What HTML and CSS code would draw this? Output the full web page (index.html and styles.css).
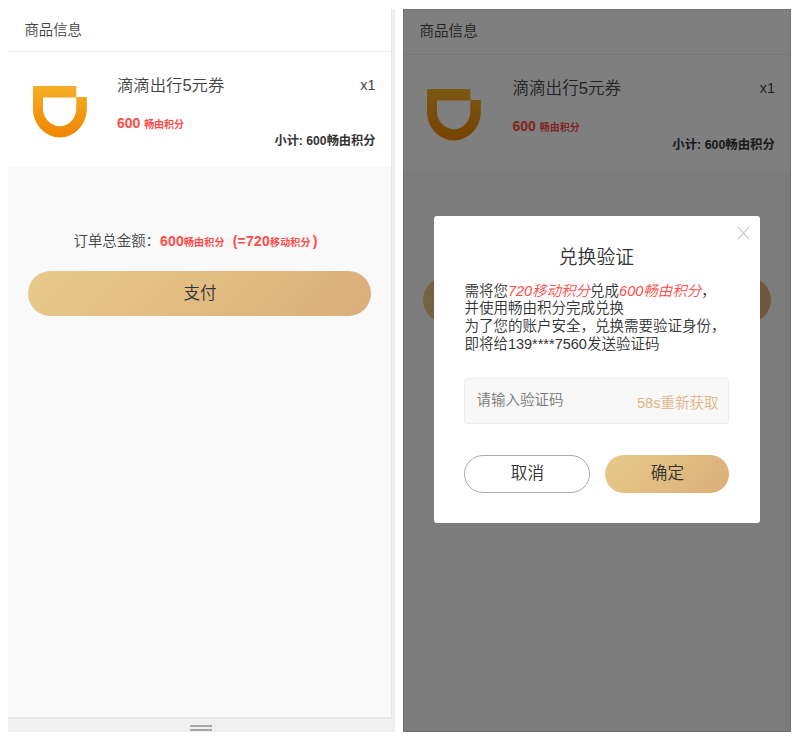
FILE: index.html
```html
<!DOCTYPE html>
<html lang="zh-CN">
<head>
<meta charset="utf-8">
<title>商品信息</title>
<link rel="stylesheet" href="styles.css">
</head>
<body>
<main class="board">
  <section class="device">
    <div class="screen">
      <header class="bar">商品信息</header>
      <div class="product">
        <svg class="logo" viewBox="0 0 54 52">
          <defs><linearGradient id="orange" x1="0" y1="0" x2="0" y2="1"><stop offset="0" stop-color="#f6ae27"/><stop offset="1" stop-color="#ef8500"/></linearGradient></defs>
          <path fill="url(#orange)" fill-rule="evenodd" d="M1.2 0H43.3V11H53.8V23C53.8 39 41 51.5 27 51.5S0 39 0 23V1.2Q0 0 1.2 0ZM10 11.6V23C10 32 18 40.3 27 40.3S43.3 32 43.3 23V11.6Z"/>
        </svg>
        <div class="info">
          <div class="row"><span class="name">滴滴出行5元券</span><span class="qty">x1</span></div>
          <div class="price">600 <small>畅由积分</small></div>
          <div class="subtotal">小计: 600畅由积分</div>
        </div>
      </div>
      <div class="total">订单总金额：<b>600<small>畅由积分</small><span class="open">(</span>=720<small>移动积分</small><span class="shut">)</span></b></div>
      <button class="pay">支付</button>
    </div>
    <div class="handle"><i></i><i></i></div>
  </section>

  <section class="page">
    <header class="bar">商品信息</header>
    <div class="product">
      <svg class="logo" viewBox="0 0 54 52">
        <path fill="url(#orange)" fill-rule="evenodd" d="M1.2 0H43.3V11H53.8V23C53.8 39 41 51.5 27 51.5S0 39 0 23V1.2Q0 0 1.2 0ZM10 11.6V23C10 32 18 40.3 27 40.3S43.3 32 43.3 23V11.6Z"/>
      </svg>
      <div class="info">
        <div class="row"><span class="name">滴滴出行5元券</span><span class="qty">x1</span></div>
        <div class="price">600 <small>畅由积分</small></div>
        <div class="subtotal">小计: 600畅由积分</div>
      </div>
    </div>
    <div class="pay"></div>
    <div class="mask">
      <div class="dialog">
        <svg class="close" viewBox="0 0 13 14"><path d="M.7.7 12.3 13.3M12.3.7.7 13.3"/></svg>
        <h2>兑换验证</h2>
        <p>需将您<em>720移动积分</em>兑成<em>600畅由积分</em>，<br>并使用畅由积分完成兑换<br>为了您的账户安全，兑换需要验证身份，<br>即将给139****7560发送验证码</p>
        <div class="code"><span>请输入验证码</span><span class="resend">58s重新获取</span></div>
        <div class="actions"><button class="cancel">取消</button><button class="ok">确定</button></div>
      </div>
    </div>
  </section>
</main>
</body>
</html>
```
FILE: styles.css
```css
* { box-sizing: border-box; }
body {
  margin: 0;
  background: #fff;
  color: #444;
  font-family: "Liberation Sans", "Noto Sans CJK SC", sans-serif;
  font-weight: 350;
}
button { border: 0; padding: 0; font: inherit; color: #333; }
.board { display: flex; gap: 8.5px; width: 800px; height: 741px; padding: 9px 8.4px; }

.device { width: 386.5px; height: 723.4px; background: #f0f0f0; }
.screen {
  width: 384px;
  height: 710px;
  background: #f9f9f9;
  border-right: 1px solid #e6e6e6;
  border-bottom: 2px solid #e7e7e7;
}
.bar { height: 43px; padding-left: 16px; border-bottom: 1px solid #f0f0f0; background: #fff; font-size: 14.4px; line-height: 42px; }
.product { display: flex; height: 115px; padding: 0 16px 0 24.6px; background: #fff; }
.logo { flex: none; width: 54px; height: 52px; margin-top: 33.5px; }
.info { flex: 1; padding: 21px 0 0 29.9px; }
.row { display: flex; justify-content: space-between; height: 24px; line-height: 24px; }
.name { font-size: 16.4px; }
.qty { font-size: 14.3px; }
.price { height: 20px; margin-top: 16px; font-size: 14px; line-height: 20px; font-weight: 700; color: #ff4b48; white-space: nowrap; }
small { font-size: 10px; }
.subtotal { height: 18px; margin-top: -1px; font-size: 12.2px; line-height: 18px; font-weight: 700; color: #333; text-align: right; }
.total { margin: 62px 0 0 65.2px; height: 24px; font-size: 14.4px; line-height: 24px; white-space: nowrap; }
.total b { font-size: 14px; font-weight: 700; color: #ff4b48; letter-spacing: .2px; }
.open { padding-left: 8px; }
.shut { padding-left: 2px; }
.pay {
  display: block;
  width: 343px;
  height: 45px;
  margin: 18.3px 0 0 20px;
  border-radius: 23px;
  background: linear-gradient(135deg, #e8ca8b, #dbae79);
  font-size: 16.5px;
  line-height: 41px;
}
.handle { display: flex; flex-direction: column; gap: 2px; width: 22px; margin: 6px auto 0 181.5px; }
.handle i { height: 2px; background: #a6a6a6; }

.page { position: relative; width: 388px; height: 723.4px; background: #f9f9f9; }
.page .bar { height: 45.5px; font-size: 14.6px; line-height: 45px; }
.page .product { height: 116.5px; padding: 0 16.5px 0 24px; }
.page .logo { margin-top: 34.5px; }
.page .info { padding: 22px 0 0 31px; }
.page .name { font-size: 16.6px; }
.page .qty { line-height: 22px; }
.page .price { margin-top: 15px; }
.page .subtotal { margin-top: 0; font-size: 12.4px; }
.page .pay { width: 348px; height: 46px; margin: 106px 0 0 19.5px; }
.mask { position: absolute; inset: 0; background: rgba(0, 0, 0, .5); border: 1px solid rgba(0, 0, 0, .1); }
.dialog { position: relative; width: 326px; height: 307px; margin: 206px 0 0 29.5px; padding: 28px 30.5px 0; border-radius: 3px; background: #fff; color: #333; }
.close { position: absolute; top: 10px; right: 10px; width: 13px; height: 14px; fill: none; stroke: #c8c8c8; stroke-width: 1.1; }
h2 { margin: 0; height: 28px; font-size: 18.8px; line-height: 28px; font-weight: 350; text-align: center; text-indent: -1px; }
p { margin: 10.5px -20px 0 0; font-size: 14.5px; line-height: 17.8px; white-space: nowrap; }
em { color: #ff4b48; }
.code { display: flex; justify-content: space-between; height: 46px; margin-top: 24px; padding: 0 10px 0 11px; border: 1px solid #eee; border-radius: 3px; background: #f8f8f8; color: #777; font-size: 14.5px; line-height: 42px; }
.resend { padding-top: 3px; line-height: 42px; color: #dfb384; }
.actions { display: flex; gap: 15px; margin-top: 31.5px; }
.actions button { flex: 1; height: 37.5px; border-radius: 19px; font-size: 16.6px; line-height: 35px; }
.cancel { border: 1px solid #aaa; background: #fff; }
.ok { background: linear-gradient(135deg, #e8ca8b, #dbae79); }
```
